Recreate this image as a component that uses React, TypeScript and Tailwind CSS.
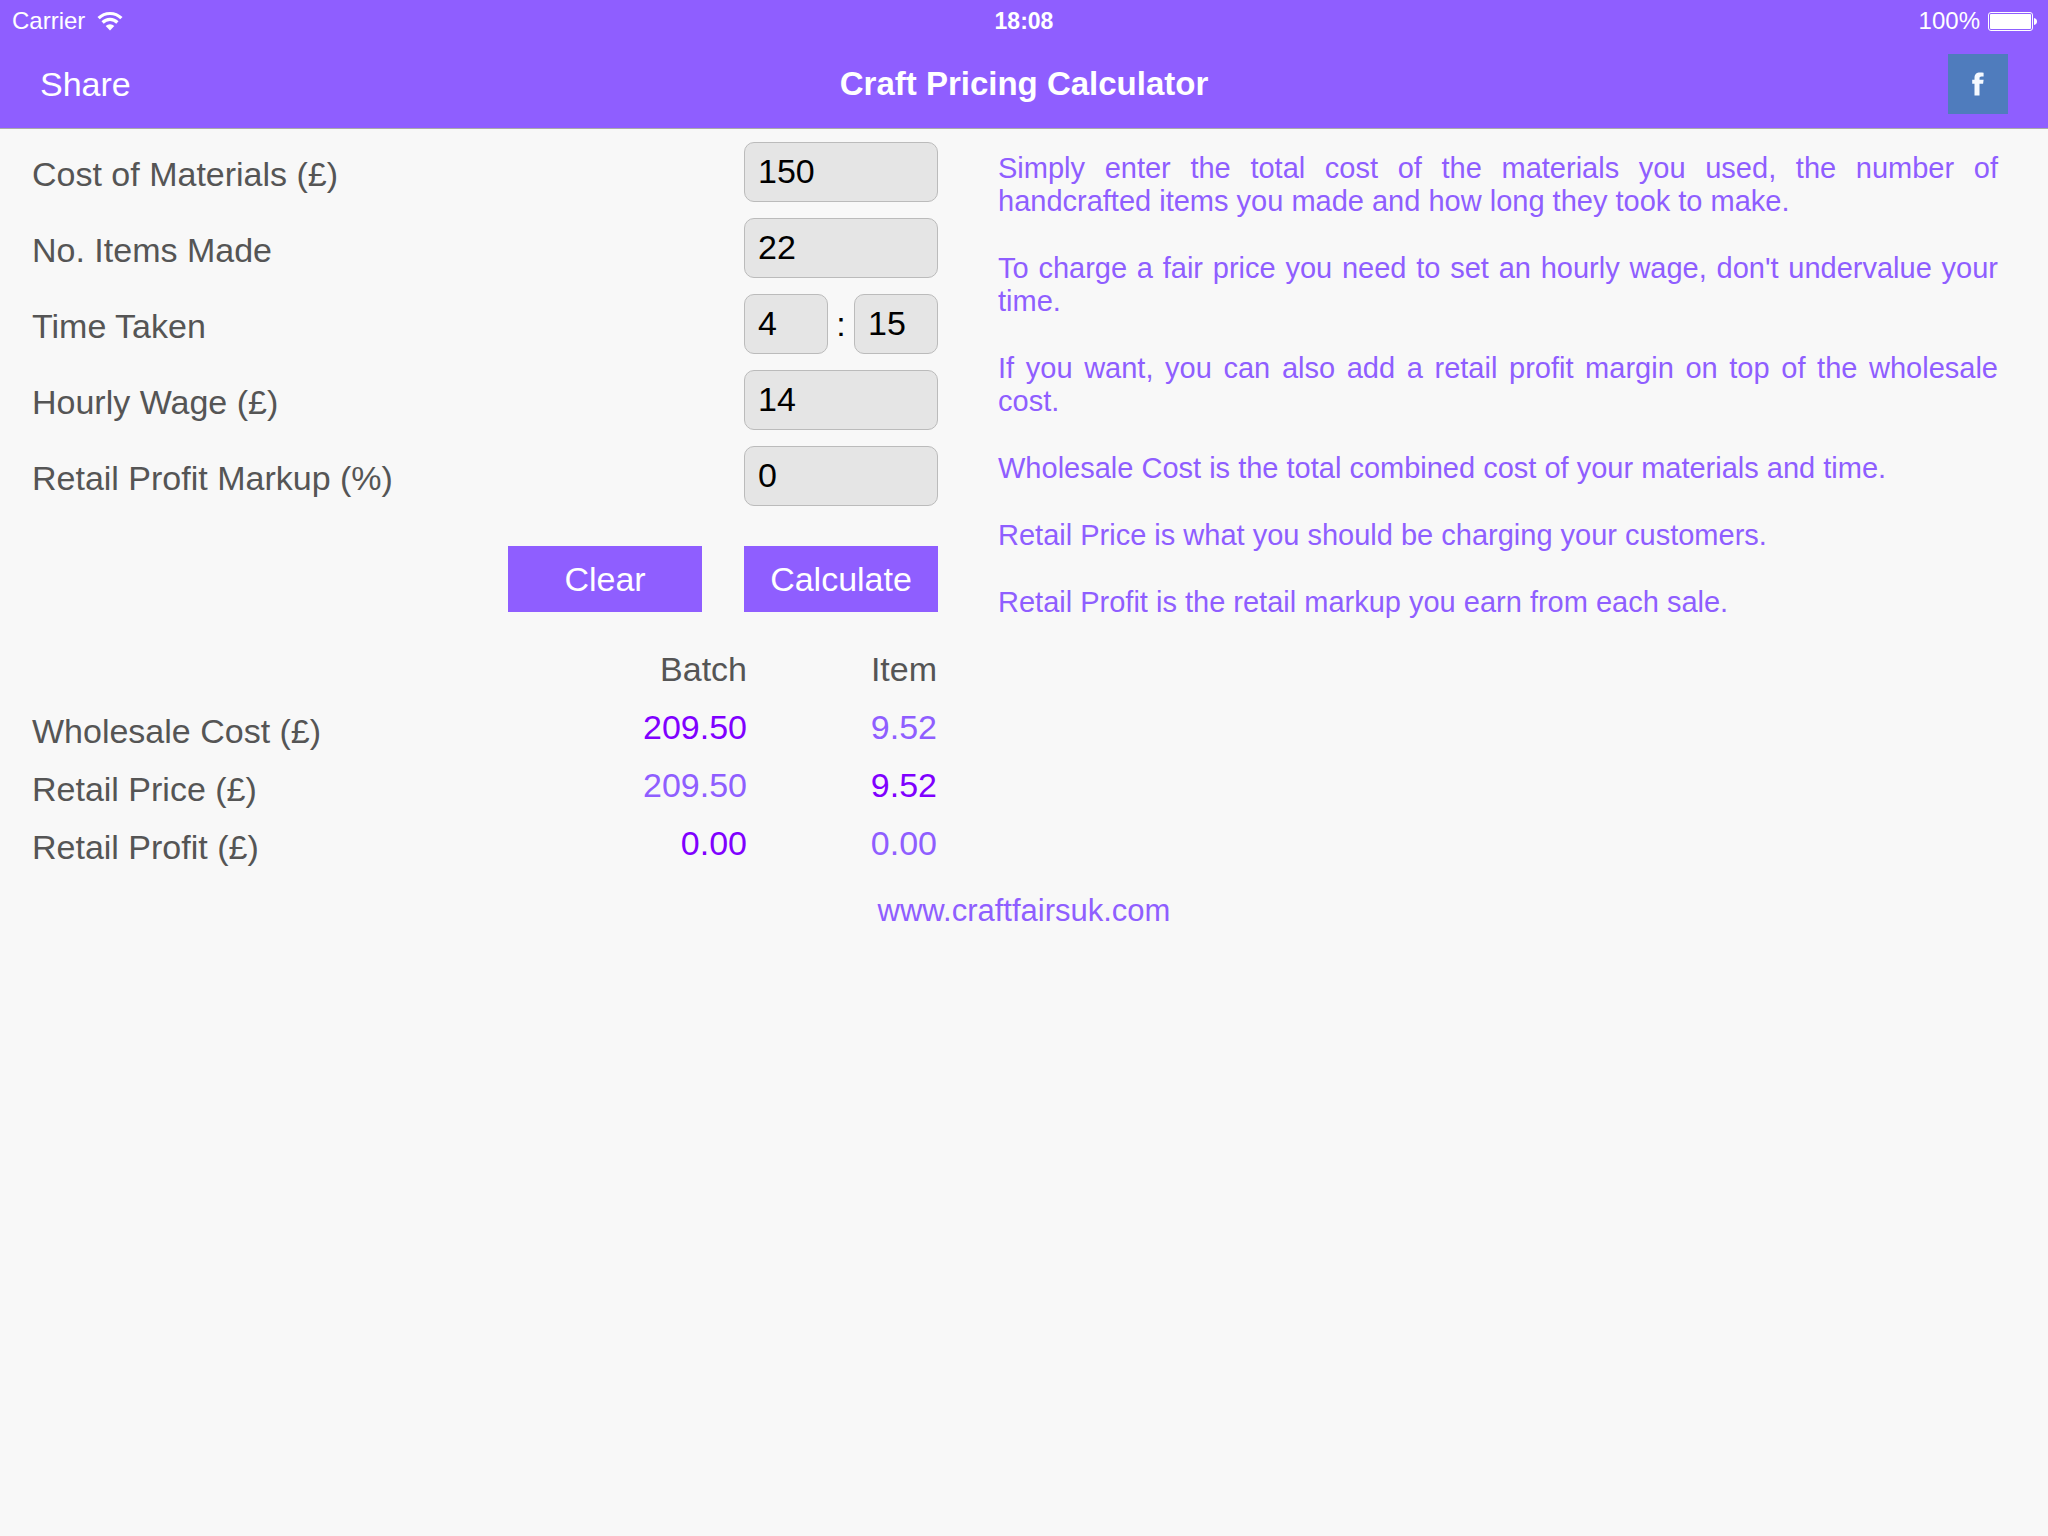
import { useState } from "react";

function WifiIcon() {
  return (
    <svg viewBox="0 0 26 20" className="h-5 w-[26px]" aria-hidden="true">
      <g fill="none" stroke="currentColor" strokeWidth="3.2">
        <path d="M1.600 7.200a16.200 16.200 0 0 1 22.800 0" />
        <path d="M5.600 11.500a10.500 10.500 0 0 1 14.800 0" />
      </g>
      <path d="M13 19.400l-4.300-4.300a6 6 0 0 1 8.600 0z" fill="currentColor" />
    </svg>
  );
}

function BatteryIcon() {
  return (
    <svg viewBox="0 0 49 19" className="h-[19px] w-[49px]" aria-hidden="true">
      <rect x="0.5" y="0.5" width="44" height="18" rx="2.5" fill="none" stroke="currentColor" />
      <rect x="2" y="2" width="41" height="15" rx="1" fill="currentColor" />
      <path d="M46 6c2 .5 3 1.800 3 3.500s-1 3-3 3.500z" fill="currentColor" />
    </svg>
  );
}

function FacebookIcon() {
  return (
    <svg viewBox="0 0 60 60" className="size-[60px]" aria-hidden="true">
      <path
        d="M26.500 41.500V29.800h-2.300V25.800h2.300v-1.800c0-3.700 2-5.500 5.400-5.500 1.500 0 2.800.1 3.700.3v3.800h-2.200c-1.400 0-1.900.7-1.900 1.900v1.300h4.100l-.5 4h-3.600V41.500z"
        fill="#f5f9ff"
      />
    </svg>
  );
}

const fieldClass =
  "h-[60px] rounded-[10px] border border-[#bbbbbb] bg-[#e5e5e5] pl-[13px] pb-[2px] text-black outline-none";

type Values = { cost: string; items: string; hours: string; minutes: string; wage: string; markup: string };

const initial: Values = { cost: "150", items: "22", hours: "4", minutes: "15", wage: "14", markup: "0" };
const empty: Values = { cost: "", items: "", hours: "", minutes: "", wage: "", markup: "" };

const rows: { id: keyof Values; label: string }[] = [
  { id: "cost", label: "Cost of Materials (£)" },
  { id: "items", label: "No. Items Made" },
  { id: "hours", label: "Time Taken" },
  { id: "wage", label: "Hourly Wage (£)" },
  { id: "markup", label: "Retail Profit Markup (%)" },
];

const help = [
  "Simply enter the total cost of the materials you used, the number of handcrafted items you made and how long they took to make.",
  "To charge a fair price you need to set an hourly wage, don't undervalue your time.",
  "If you want, you can also add a retail profit margin on top of the wholesale cost.",
  "Wholesale Cost is the total combined cost of your materials and time.",
  "Retail Price is what you should be charging your customers.",
  "Retail Profit is the retail markup you earn from each sale.",
];

function compute(v: Values) {
  const wholesale = Number(v.cost) + (Number(v.hours) + Number(v.minutes) / 60) * Number(v.wage);
  const retail = wholesale * (1 + Number(v.markup) / 100);
  const items = Number(v.items) || 1;
  return [
    { label: "Wholesale Cost (£)", total: wholesale, each: wholesale / items, strong: "batch" },
    { label: "Retail Price (£)", total: retail, each: retail / items, strong: "item" },
    { label: "Retail Profit (£)", total: retail - wholesale, each: (retail - wholesale) / items, strong: "batch" },
  ];
}

export default function App() {
  const [values, setValues] = useState<Values>(initial);
  const [results, setResults] = useState(() => compute(initial));

  const set = (id: keyof Values) => (e: React.ChangeEvent<HTMLInputElement>) =>
    setValues({ ...values, [id]: e.target.value });

  return (
    <div className="min-h-screen bg-[#f8f8f8] font-['Liberation_Sans',Arial,sans-serif] text-[34px] leading-10 text-[#555555]">
      <header className="border-b border-[#aaaaaa] bg-[#8f5eff] text-white">
        <div className="grid h-10 grid-cols-3 items-center px-3 pt-[2px] text-[24px] leading-7">
          <div className="flex items-center gap-3">
            <span>Carrier</span>
            <WifiIcon />
          </div>
          <time className="text-center text-[23px] font-bold">18:08</time>
          <div className="-mr-px flex items-center justify-end gap-2">
            <span>100%</span>
            <BatteryIcon />
          </div>
        </div>
        <div className="grid h-[88px] grid-cols-[1fr_auto_1fr] items-center px-10">
          <button type="button" className="justify-self-start">
            Share
          </button>
          <h1 className="text-[33px] font-bold">Craft Pricing Calculator</h1>
          <button type="button" aria-label="Facebook" className="justify-self-end bg-[#4f7cbd]">
            <FacebookIcon />
          </button>
        </div>
      </header>

      <main className="grid grid-cols-[906fr_1000fr] gap-[60px] pt-[13px] pr-[50px] pl-8">
        <div>
          <form
            onSubmit={(e) => {
              e.preventDefault();
              setResults(compute(values));
            }}
          >
            <div className="flex flex-col gap-4">
              {rows.map(({ id, label }) => (
                <div key={id} className="flex h-[60px] items-center justify-between">
                  <label htmlFor={id} className="pt-[3px]">
                    {label}
                  </label>
                  {id === "hours" ? (
                    <div className="flex w-[194px] items-center justify-between text-black">
                      <input id="hours" value={values.hours} onChange={set("hours")} className={`${fieldClass} w-[84px]`} />
                      <span>:</span>
                      <input
                        id="minutes"
                        aria-label="Minutes"
                        value={values.minutes}
                        onChange={set("minutes")}
                        className={`${fieldClass} w-[84px]`}
                      />
                    </div>
                  ) : (
                    <input id={id} value={values[id]} onChange={set(id)} className={`${fieldClass} w-[194px]`} />
                  )}
                </div>
              ))}
            </div>
            <div className="mt-10 flex justify-end gap-[42px] text-white">
              <button type="button" onClick={() => setValues(empty)} className="h-[66px] w-[194px] bg-[#8f5eff]">
                Clear
              </button>
              <button type="submit" className="h-[66px] w-[194px] bg-[#8f5eff]">
                Calculate
              </button>
            </div>
          </form>

          <table className="mt-7 w-full">
            <thead>
              <tr className="h-[58px]">
                <td />
                <th className="w-[240px] text-right font-normal">Batch</th>
                <th className="w-[191px] pr-px text-right font-normal">Item</th>
              </tr>
            </thead>
            <tbody>
              {results.map((r) => (
                <tr key={r.label} className="h-[58px]">
                  <th scope="row" className="pt-[7px] text-left font-normal">
                    {r.label}
                  </th>
                  <td className={`text-right ${r.strong === "batch" ? "text-[#7f00ff]" : "text-[#8f5eff]"}`}>
                    {r.total.toFixed(2)}
                  </td>
                  <td className={`pr-px text-right ${r.strong === "item" ? "text-[#7f00ff]" : "text-[#8f5eff]"}`}>
                    {r.each.toFixed(2)}
                  </td>
                </tr>
              ))}
            </tbody>
          </table>
        </div>

        <section className="flex flex-col gap-[34px] pt-[10px] text-justify text-[29px] leading-[33px] text-[#8f5eff]">
          {help.map((text) => (
            <p key={text}>{text}</p>
          ))}
        </section>
      </main>

      <footer className="pt-[19px] text-center text-[31px] text-[#8f5eff]">
        <a href="http://www.craftfairsuk.com">www.craftfairsuk.com</a>
      </footer>
    </div>
  );
}
